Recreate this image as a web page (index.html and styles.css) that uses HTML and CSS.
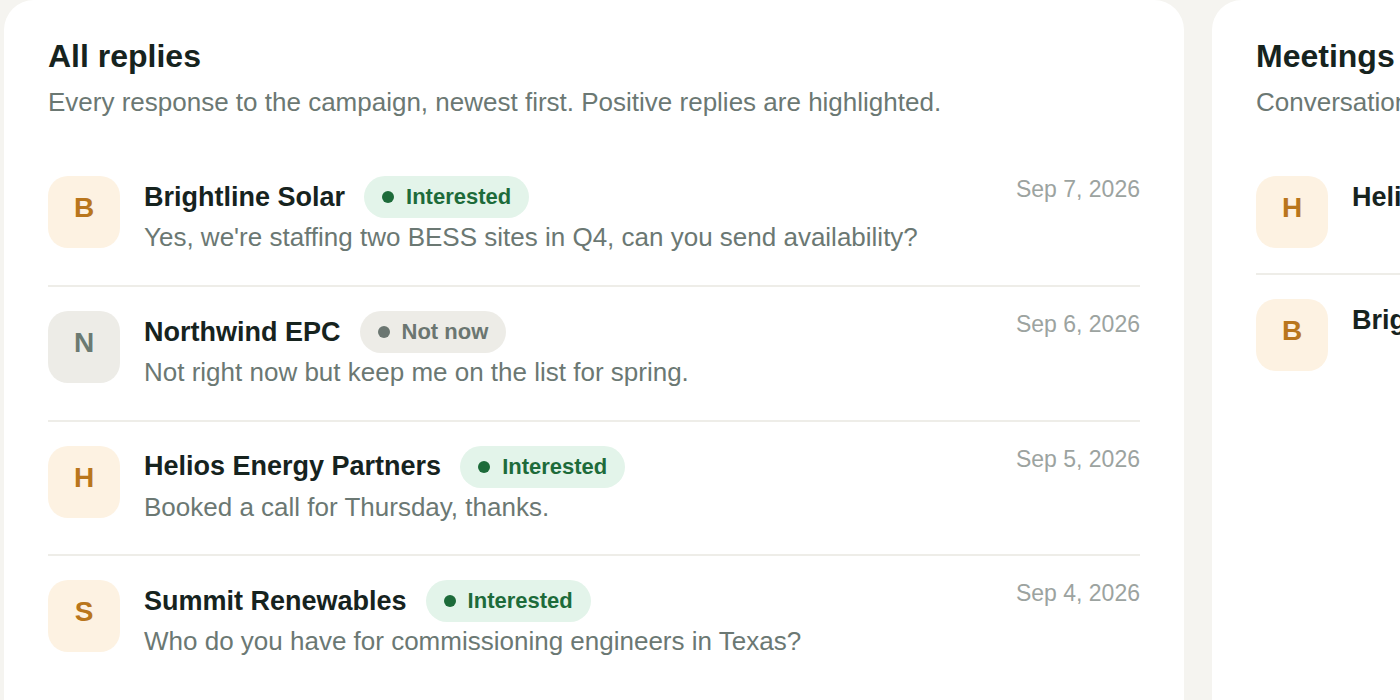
FILE: index.html
```html
<!DOCTYPE html>
<html lang="en">
<head>
<meta charset="utf-8">
<title>Replies</title>
<link rel="stylesheet" href="styles.css">
</head>
<body>
<div class="page">
  <section class="card card-main">
    <h1 class="card-title">All replies</h1>
    <p class="card-sub">Every response to the campaign, newest first. Positive replies are highlighted.</p>
    <div class="list">
      <div class="row">
        <div class="avatar avatar-warm">B</div>
        <div class="row-body">
          <div class="row-head">
            <span class="name">Brightline Solar</span>
            <span class="badge badge-green"><span class="dot"></span>Interested</span>
          </div>
          <div class="msg">Yes, we're staffing two BESS sites in Q4, can you send availability?</div>
        </div>
        <div class="date">Sep 7, 2026</div>
      </div>
      <div class="row">
        <div class="avatar avatar-gray">N</div>
        <div class="row-body">
          <div class="row-head">
            <span class="name">Northwind EPC</span>
            <span class="badge badge-gray"><span class="dot"></span>Not now</span>
          </div>
          <div class="msg">Not right now but keep me on the list for spring.</div>
        </div>
        <div class="date">Sep 6, 2026</div>
      </div>
      <div class="row">
        <div class="avatar avatar-warm">H</div>
        <div class="row-body">
          <div class="row-head">
            <span class="name">Helios Energy Partners</span>
            <span class="badge badge-green"><span class="dot"></span>Interested</span>
          </div>
          <div class="msg">Booked a call for Thursday, thanks.</div>
        </div>
        <div class="date">Sep 5, 2026</div>
      </div>
      <div class="row">
        <div class="avatar avatar-warm">S</div>
        <div class="row-body">
          <div class="row-head">
            <span class="name">Summit Renewables</span>
            <span class="badge badge-green"><span class="dot"></span>Interested</span>
          </div>
          <div class="msg">Who do you have for commissioning engineers in Texas?</div>
        </div>
        <div class="date">Sep 4, 2026</div>
      </div>
    </div>
  </section>

  <section class="card card-side">
    <h1 class="card-title">Meetings booked</h1>
    <p class="card-sub">Conversations that turned into calls.</p>
    <div class="list">
      <div class="row row-short">
        <div class="avatar avatar-warm">H</div>
        <div class="row-body">
          <div class="row-head">
            <span class="name">Helios Energy Partners</span>
          </div>
        </div>
      </div>
      <div class="row row-short">
        <div class="avatar avatar-warm">B</div>
        <div class="row-body">
          <div class="row-head">
            <span class="name">Brightline Solar</span>
          </div>
        </div>
      </div>
    </div>
  </section>
</div>
</body>
</html>
```

FILE: styles.css
```css
html, body {
  margin: 0;
  padding: 0;
  height: 700px;
  overflow: hidden;
  background: #f5f4f0;
  font-family: "Liberation Sans", Arial, sans-serif;
}

.page {
  display: flex;
  align-items: flex-start;
  gap: 28px;
  padding-left: 4px;
}

.card {
  flex: 0 0 auto;
  box-sizing: border-box;
  background: #ffffff;
  border-radius: 30px;
  padding: 37px 44px;
  min-height: 780px;
}

.card-main {
  width: 1180px;
}

.card-side {
  width: 620px;
}

.card-title {
  margin: 0;
  font-size: 32px;
  line-height: 1.2;
  font-weight: 700;
  color: #16231e;
  white-space: nowrap;
}

.card-sub {
  margin: 8px 0 0;
  font-size: 26px;
  line-height: 39px;
  color: #6b7873;
  white-space: nowrap;
}

.list {
  margin-top: 30px;
}

.row {
  display: flex;
  align-items: flex-start;
  gap: 24px;
  padding: 24px 0 27.67px;
  border-bottom: 2px solid #eeede8;
}

.row-short {
  padding-bottom: 25px;
}

.row:last-child {
  border-bottom: none;
}

.avatar {
  flex: 0 0 72px;
  width: 72px;
  height: 72px;
  box-sizing: border-box;
  padding-bottom: 8px;
  border-radius: 20px;
  display: flex;
  align-items: center;
  justify-content: center;
  font-size: 28px;
  font-weight: 700;
}

.avatar-warm {
  background: #fdf2e2;
  color: #b9761c;
}

.avatar-gray {
  background: #edece7;
  color: #6b7a72;
}

.row-body {
  flex: 1;
  min-width: 0;
}

.row-head {
  display: flex;
  align-items: center;
  gap: 19px;
  height: 42px;
}

.name {
  font-size: 27px;
  font-weight: 700;
  color: #16231e;
  white-space: nowrap;
}

.badge {
  display: inline-flex;
  align-items: center;
  gap: 12px;
  height: 42px;
  padding: 0 18px;
  border-radius: 21px;
  font-size: 22px;
  font-weight: 700;
  white-space: nowrap;
}

.dot {
  width: 12px;
  height: 12px;
  border-radius: 50%;
  background: currentColor;
}

.badge-green {
  background: #e3f4ea;
  color: #1d6b3a;
}

.badge-gray {
  background: #edece7;
  color: #6b7671;
}

.msg {
  margin-top: 0;
  font-size: 26px;
  line-height: 39px;
  color: #6b7873;
  white-space: nowrap;
}

.date {
  flex: 0 0 auto;
  font-size: 23px;
  line-height: 1.2;
  color: #9ca3a0;
  white-space: nowrap;
}
```
